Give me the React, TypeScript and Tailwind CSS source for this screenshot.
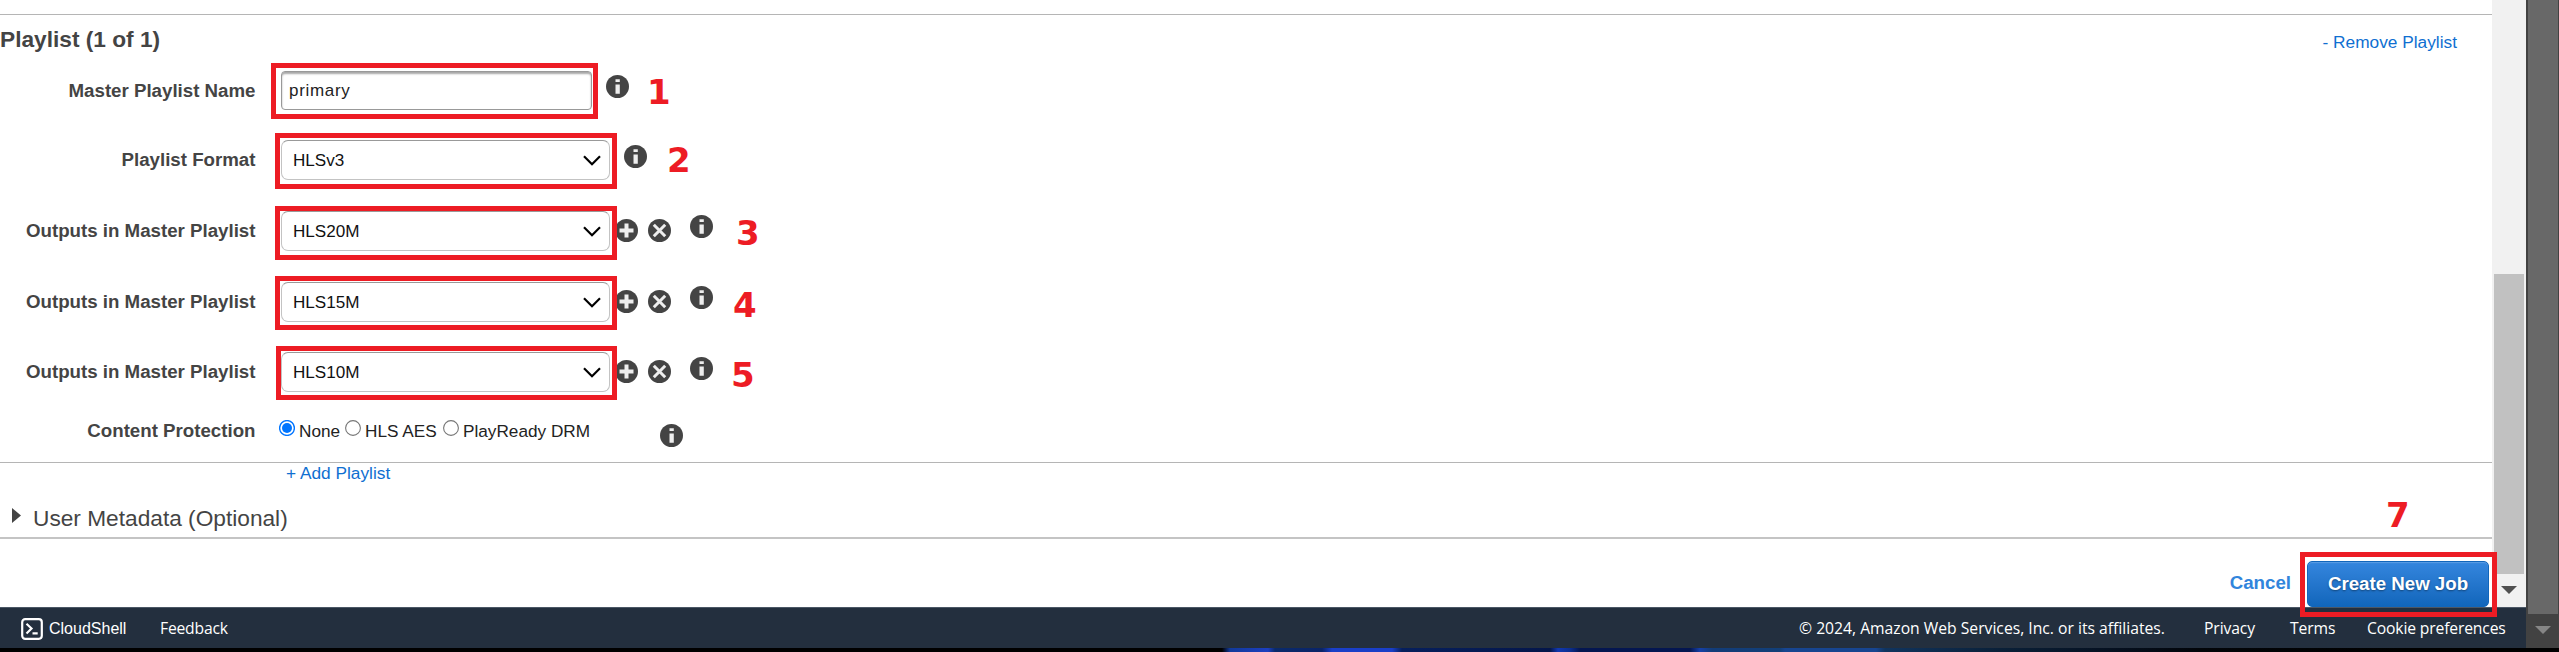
import React from "react";

const Info = ({ className = "" }: { className?: string }) => (
  <svg className={`absolute h-[23px] w-[23px] ${className}`} viewBox="0 0 23 23">
    <circle cx="11.5" cy="11.5" r="11.5" fill="#444" />
    <path d="M9.5 4.3h4.3v2.6H9.5zM9.5 9.5h4.3v9.3H9.5z" fill="#eee" />
  </svg>
);

const Plus = () => (
  <svg className="h-[23px] w-[23px] shrink-0" viewBox="0 0 23 23">
    <circle cx="11.5" cy="11.5" r="11.5" fill="#444" />
    <path d="M11.5 4.5v14M4.5 11.5h14" stroke="#eee" strokeWidth="4" />
  </svg>
);

const Cross = () => (
  <svg className="h-[23px] w-[23px] shrink-0" viewBox="0 0 23 23">
    <circle cx="11.5" cy="11.5" r="11.5" fill="#444" />
    <path d="M5.8 5.8l11.4 11.4M17.2 5.8L5.8 17.2" stroke="#eee" strokeWidth="3" />
  </svg>
);

const RowButtons = () => (
  <div className="ml-[5px] flex gap-[10px] pb-px">
    <Plus />
    <Cross />
  </div>
);

const Label = ({ children }: { children: React.ReactNode }) => (
  <div className="w-[256px] shrink-0 whitespace-nowrap pr-[0.5px] text-right text-[18.7px] font-bold leading-6 text-[#444]">
    {children}
  </div>
);

const Select = ({ value }: { value: string }) => (
  <div className="ml-[25px] flex h-10 w-[329px] shrink-0 items-center justify-between rounded-[7px] border border-[#c3c3c3] border-t-[#999] bg-white pl-[11px] pr-[8px] text-[17.1px] text-[#111]">
    <span className="pt-px">{value}</span>
    <svg className="mt-px h-[11px] w-[18px]" viewBox="0 0 18 11">
      <path d="M1 1.2l8 8 8-8" fill="none" stroke="#000" strokeWidth="2.2" />
    </svg>
  </div>
);

const Radio = ({ checked = false }: { checked?: boolean }) => (
  <svg className="h-4 w-4 shrink-0 -translate-y-[3px]" viewBox="0 0 16 16">
    <circle cx="8" cy="8" r="7.4" fill="#fff" stroke={checked ? "#0075ff" : "#767676"} strokeWidth={checked ? 1.4 : 1.1} />
    {checked && <circle cx="8" cy="8" r="5" fill="#0075ff" />}
  </svg>
);

const Frame = ({ className }: { className: string }) => (
  <div className={`absolute border-[5px] border-[#ed1c24] ${className}`} />
);

const Num = ({ className, children }: { className: string; children: React.ReactNode }) => (
  <div className={`absolute font-['DejaVu_Sans',sans-serif] text-[34px] font-bold leading-[34px] text-[#ed1c24] ${className}`}>
    {children}
  </div>
);

export default function App() {
  return (
    <div className="relative flex h-[652px] w-[2559px] flex-col overflow-hidden bg-white font-['Liberation_Sans',Arial,sans-serif]">
      <div className="flex h-[648px]">
        <div className="flex w-[2526px] flex-col">
          <div className="flex h-[607px]">
            <main className="flex w-[2492px] flex-col bg-white">
              <div className="mt-[14px] flex h-[42px] justify-between border-t border-[#b5b5b5] pr-[35px]">
                <h2 className="pt-[11px] text-[22.7px] font-bold leading-[26px] text-[#444]">Playlist (1 of 1)</h2>
                <a className="pt-[15px] text-[17.3px] leading-[24px] text-[#0f6fd1]">- Remove Playlist</a>
              </div>
              <div className="relative flex h-[69px] items-center">
                <Label>Master Playlist Name</Label>
                <div className="ml-[25px] flex h-[39px] w-[311px] items-center rounded-[4px] border border-[#999] bg-white pl-[7px] text-[17px] tracking-[0.7px] text-[#222] shadow-[inset_0_2px_2px_rgba(0,0,0,0.35)]">
                  primary
                </div>
                <Info className="left-[606px] top-[19px]" />
              </div>
              <div className="relative flex h-[70px] items-center">
                <Label>Playlist Format</Label>
                <Select value="HLSv3" />
                <Info className="left-[624px] top-[20px]" />
              </div>
              <div className="relative flex h-[72px] items-center">
                <Label>Outputs in Master Playlist</Label>
                <Select value="HLS20M" />
                <RowButtons />
                <Info className="left-[690px] top-[20px]" />
              </div>
              <div className="relative flex h-[70px] items-center">
                <Label>Outputs in Master Playlist</Label>
                <Select value="HLS15M" />
                <RowButtons />
                <Info className="left-[690px] top-[19px]" />
              </div>
              <div className="relative flex h-[70px] items-center">
                <Label>Outputs in Master Playlist</Label>
                <Select value="HLS10M" />
                <RowButtons />
                <Info className="left-[690px] top-[20px]" />
              </div>
              <div className="relative flex h-[55px] items-center pb-[7px]">
                <Label>Content Protection</Label>
                <div className="ml-[23px] flex items-center whitespace-nowrap text-[17.2px] leading-6 text-[#222]">
                  <Radio checked />
                  <span className="w-[50px] pl-[4px]">None</span>
                  <Radio />
                  <span className="w-[82px] pl-[4px]">HLS AES</span>
                  <Radio />
                  <span className="pl-[4px]">PlayReady DRM</span>
                </div>
                <Info className="left-[660px] top-[17px]" />
              </div>
              <div className="h-[35px] border-t border-[#b5b5b5] pl-[286px] text-[17.3px] leading-[21px] text-[#0f6fd1]">
                + Add Playlist
              </div>
              <div className="flex h-[42px] items-center border-b-2 border-[#c4c4c4] pl-[12px] text-[22.7px] leading-[26px] text-[#444]">
                <svg className="mr-[12px] h-[15px] w-[9px] -translate-y-[2px]" viewBox="0 0 9 15">
                  <path d="M0 0l9 7.5L0 15z" fill="#444" />
                </svg>
                <span className="pt-px">User Metadata (Optional)</span>
              </div>
              <div className="flex h-[68px] items-end justify-end pr-[3px] text-[18.7px] font-bold">
                <a className="mr-[16px] pb-px leading-[46px] text-[#3185dc]">Cancel</a>
                <button className="h-[46px] w-[182px] rounded-[5px] border border-[#1166bb] bg-gradient-to-b from-[#3486de] to-[#1166bb] text-white shadow-[inset_0_1px_1px_rgba(255,255,255,0.2)] [text-shadow:0_1px_2px_rgba(0,0,0,0.4)]">
                  Create New Job
                </button>
              </div>
            </main>
            <aside className="flex w-[34px] flex-col items-center bg-[#f1f1f1] pt-[274px]">
              <div className="h-[300px] w-[30px] bg-[#c1c1c1]" />
              <svg className="mt-[12px] h-[8px] w-[16px]" viewBox="0 0 16 8">
                <path d="M0 0h16L8 8z" fill="#505050" />
              </svg>
            </aside>
          </div>
          <footer className="flex h-[41px] items-center border-t border-[#4b5765] bg-[#232f3e] pl-[21px] pt-px font-['Open_Sans',sans-serif] text-[15.7px] font-medium text-white">
            <svg className="h-[22px] w-[22px]" viewBox="0 0 22 22" fill="none" stroke="#fff">
              <rect x="1.2" y="1.2" width="19.6" height="19.6" rx="3" strokeWidth="2.2" />
              <path d="M5.5 5.8l5 4.7-5 5M11.5 15.3h5.2" strokeWidth="2.2" />
            </svg>
            <span className="ml-[6px] w-[111px] font-['Liberation_Sans',Arial,sans-serif] text-[16px] font-normal">CloudShell</span>
            <span className="flex-1 tracking-[-0.2px]">Feedback</span>
            <span className="w-[405px] whitespace-nowrap">© 2024, Amazon Web Services, Inc. or its affiliates.</span>
            <span className="w-[86px] tracking-[-0.1px]">Privacy</span>
            <span className="w-[77px] tracking-[-0.1px]">Terms</span>
            <span className="w-[159px] whitespace-nowrap tracking-[-0.15px]">Cookie preferences</span>
          </footer>
        </div>
        <aside className="flex w-[33px] flex-col items-center bg-[#424242] pl-px">
          <div className="h-[614px] w-[30px] bg-[#686868]" />
          <svg className="mt-[12px] h-[8px] w-[16px]" viewBox="0 0 16 8">
            <path d="M0 0h16L8 8z" fill="#868686" />
          </svg>
        </aside>
      </div>
      <div className="h-1 bg-[linear-gradient(90deg,#000_0,#000_1222px,#123a9a_1230px,#1c3fc0_1268px,#0a2a6b_1275px,#0a2468_1322px,#1a3fc8_1332px,#1a3fc8_1392px,#061f5c_1402px,#04164a_1550px,#1238b0_1558px,#0c2f90_1570px,#041650_1580px,#041650_1690px,#1640a8_1700px,#123c78_1712px,#123f78_1780px,#174590_1785px,#174590_1876px,#10345e_1885px,#0a2038_2000px,#050f1e_2120px,#020509_2200px,#000_2400px)]" />

      <Frame className="left-[271px] top-[63px] h-[56px] w-[327px]" />
      <Frame className="left-[275px] top-[133px] h-[56px] w-[342px]" />
      <Frame className="left-[275px] top-[206px] h-[54px] w-[342px]" />
      <Frame className="left-[275px] top-[276px] h-[54px] w-[342px]" />
      <Frame className="left-[276px] top-[346px] h-[54px] w-[341px]" />
      <Frame className="left-[2300px] top-[552px] h-[65px] w-[197px]" />
      <Num className="left-[647px] top-[75px]">1</Num>
      <Num className="left-[667px] top-[143px]">2</Num>
      <Num className="left-[736px] top-[216px]">3</Num>
      <Num className="left-[733px] top-[288px]">4</Num>
      <Num className="left-[731px] top-[358px]">5</Num>
      <Num className="left-[2386px] top-[498px]">7</Num>
    </div>
  );
}
